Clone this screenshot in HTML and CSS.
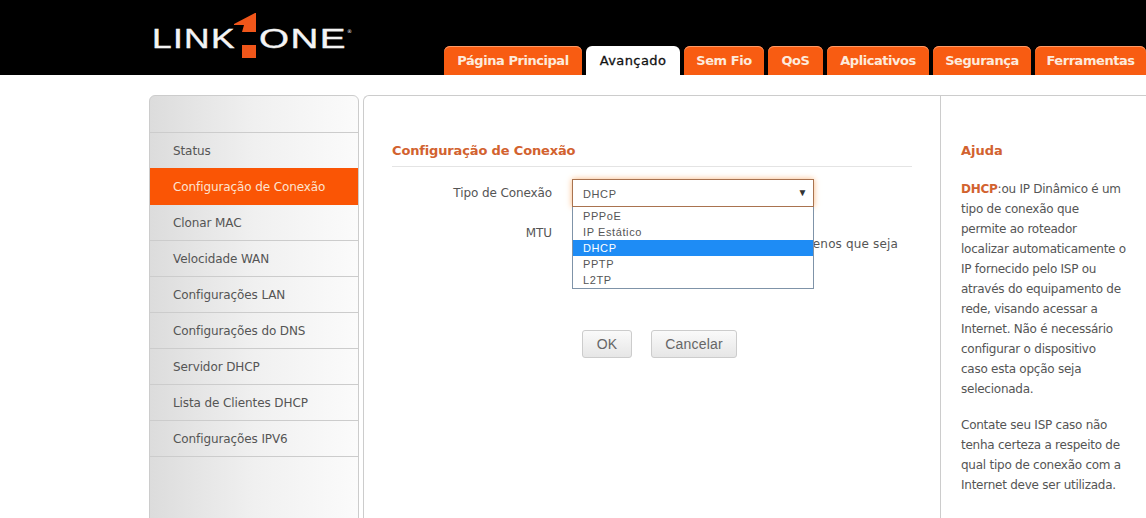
FILE: index.html
```html
<!DOCTYPE html>
<html lang="pt-BR">

<head>
    <meta charset="UTF-8">
    <meta name="viewport" content="width=device-width, initial-scale=1.0">
    <title>Configuração de Conexão</title>
    <link rel="stylesheet" href="styles.css">
</head>

<body>
    <header class="topBar">
        <div class="logo">
            <span class="logoWord logoLink">LINK</span>
            <svg class="logoOne" width="24" height="46" viewBox="0 0 24 46">
                <polygon fill="#f0561a" points="2,11 23,0 24,0 24,19 10,19 12,12 2,12" />
                <polygon fill="#f0561a" points="10,32 24,32 24,45 10,45" />
            </svg>
            <span class="logoWord logoRest">ONE</span>
            <span class="logoMark">®</span>
        </div>
        <nav class="tabs">
            <a class="tab tabHome" href="#">Página Principal</a>
            <a class="tab tabAdvanced active" href="#">Avançado</a>
            <a class="tab tabWifi" href="#">Sem Fio</a>
            <a class="tab tabQos" href="#">QoS</a>
            <a class="tab tabApps" href="#">Aplicativos</a>
            <a class="tab tabSecurity" href="#">Segurança</a>
            <a class="tab tabTools" href="#">Ferramentas</a>
        </nav>
    </header>

    <div class="page">
        <aside class="sidebar">
            <ul class="menu">
                <li><a href="#">Status</a></li>
                <li class="current"><a href="#">Configuração de Conexão</a></li>
                <li><a href="#">Clonar MAC</a></li>
                <li><a href="#">Velocidade WAN</a></li>
                <li><a href="#">Configurações LAN</a></li>
                <li><a href="#">Configurações do DNS</a></li>
                <li><a href="#">Servidor DHCP</a></li>
                <li><a href="#">Lista de Clientes DHCP</a></li>
                <li><a href="#">Configurações IPV6</a></li>
            </ul>
        </aside>

        <main class="panel">
            <section class="content">
                <h2 class="sectionTitle">Configuração de Conexão</h2>
                <form class="form">
                    <div class="formRow">
                        <label class="formLabel">Tipo de Conexão</label>
                        <div class="selectBox">
                            <div class="selectValue">DHCP<span class="arrow">▼</span></div>
                            <ul class="options">
                                <li>PPPoE</li>
                                <li>IP Estático</li>
                                <li class="selected">DHCP</li>
                                <li>PPTP</li>
                                <li>L2TP</li>
                            </ul>
                        </div>
                    </div>
                    <div class="formRow mtuRow">
                        <label class="formLabel">MTU</label>
                        <p class="mtuNote">menos que seja</p>
                    </div>
                    <div class="buttons">
                        <button type="button" class="btn btnOk">OK</button>
                        <button type="button" class="btn btnCancel">Cancelar</button>
                    </div>
                </form>
            </section>

            <aside class="help">
                <h2 class="helpTitle">Ajuda</h2>
                <p><strong>DHCP</strong>:ou IP Dinâmico é um<br>tipo de conexão que<br>permite ao roteador<br>localizar automaticamente o<br>IP fornecido pelo ISP ou<br>através do equipamento de<br>rede, visando acessar a<br>Internet. Não é necessário<br>configurar o dispositivo<br>caso esta opção seja<br>selecionada.</p>
                <p>Contate seu ISP caso não<br>tenha certeza a respeito de<br>qual tipo de conexão com a<br>Internet deve ser utilizada.</p>
            </aside>
        </main>
    </div>
</body>

</html>
```

FILE: styles.css
```css
html,
body {
    margin: 0;
    height: 518px;
    overflow: hidden;
    background-color: #fff;
    font-family: "DejaVu Sans", Verdana, sans-serif;
    font-size: 12px;
    letter-spacing: -0.1px;
    color: #555;
}

/* Header */
.topBar {
    display: flex;
    align-items: flex-end;
    height: 75px;
    background-color: #000;
    position: relative;
}

.logo {
    display: flex;
    align-items: flex-start;
    width: 444px;
    height: 75px;
    padding-left: 152px;
    box-sizing: border-box;
    flex-shrink: 0;
    color: #f4f4f4;
}

.logoWord {
    display: block;
    margin-top: 24px;
    font-family: "Liberation Sans", Arial, sans-serif;
    font-size: 27px;
    line-height: 30px;
    letter-spacing: 1px;
    -webkit-text-stroke: 0.4px #f4f4f4;
    transform-origin: left center;
}

.logoLink {
    width: 80px;
    transform: scaleX(1.31);
}

.logoOne {
    margin-top: 13px;
    flex-shrink: 0;
}

.logoRest {
    width: 88px;
    margin-left: 3px;
    transform: scaleX(1.43);
}

.logoMark {
    font-size: 5px;
    line-height: 6px;
    margin-top: 28px;
    letter-spacing: 0;
}

.tabs {
    display: flex;
    align-items: flex-end;
    gap: 4px;
    flex: 1;
    height: 29px;
}

.tab {
    display: block;
    height: 29px;
    line-height: 29px;
    box-sizing: border-box;
    text-align: center;
    text-decoration: none;
    font-size: 13px;
    font-weight: bold;
    letter-spacing: -0.45px;
    white-space: nowrap;
    color: #fdeadc;
    background-color: #f85c12;
    border-radius: 6px 6px 0 0;
    box-shadow: inset 0 1px 0 #ff9a66;
}

.tab.active {
    color: #111;
    background-color: #fff;
    box-shadow: none;
    font-weight: normal;
    letter-spacing: 0.4px;
    -webkit-text-stroke: 0.3px #111;
}

.tabHome { width: 138px; }
.tabAdvanced { width: 94px; }
.tabWifi { width: 80px; }
.tabQos { width: 55px; }
.tabApps { width: 102px; }
.tabSecurity { width: 98px; }
.tabTools { width: 111px; flex-shrink: 0; }

/* Body of the page */
.page {
    display: flex;
    align-items: stretch;
    gap: 4px;
    height: 443px;
    padding: 20px 0 0 149px;
    box-sizing: border-box;
}

.sidebar {
    width: 210px;
    height: 440px;
    flex-shrink: 0;
    box-sizing: border-box;
    padding-top: 36px;
    border: 1px solid #ccc;
    border-radius: 6px 6px 0 0;
    background-image: linear-gradient(90deg, #dcdcdc, #f0f0f0 50%, #fbfbfb);
}

.menu {
    list-style: none;
    margin: 0;
    padding: 0;
    border-top: 1px solid #ccc;
}

.menu li {
    height: 35px;
    border-bottom: 1px solid #ccc;
}

.menu a {
    display: block;
    padding-left: 23px;
    line-height: 37px;
    text-decoration: none;
    color: #555;
}

.menu li.current {
    background-color: #fa5505;
    border-bottom-color: #fa5505;
    margin-top: -1px;
    padding-top: 1px;
}

.menu li.current a {
    color: #fde3cf;
}

.panel {
    display: flex;
    flex: 1;
    height: 440px;
    box-sizing: border-box;
    border: 1px solid #ccc;
    border-right: none;
    border-radius: 6px 0 0 0;
}

.content {
    width: 520px;
    flex-shrink: 0;
    padding: 45px 28px 0 28px;
}

.sectionTitle {
    margin: 0;
    padding-bottom: 6px;
    font-size: 13px;
    letter-spacing: -0.15px;
    line-height: 19px;
    color: #d2622f;
    border-bottom: 1px solid #e4e4e4;
}

.form {
    margin-top: 12px;
}

.formRow {
    display: flex;
    align-items: flex-start;
    gap: 20px;
    position: relative;
}

.formLabel {
    width: 160px;
    text-align: right;
    line-height: 28px;
}

.selectBox {
    position: relative;
    width: 242px;
    height: 28px;
    z-index: 2;
}

.selectValue {
    box-sizing: border-box;
    height: 28px;
    padding: 0 10px;
    line-height: 28px;
    font-family: "Liberation Sans", Arial, sans-serif;
    font-size: 11px;
    letter-spacing: 0.6px;
    border: 1px solid #a9734f;
    box-shadow: 0 0 6px #fbb97f;
    position: relative;
}

.arrow {
    position: absolute;
    right: 5px;
    top: -1px;
    font-size: 10px;
    color: #333;
}

/* Open list lies over the MTU row */
.options {
    position: absolute;
    top: 28px;
    left: 0;
    right: 0;
    margin: 0;
    padding: 1px 0 0;
    list-style: none;
    background-color: #fff;
    border: 1px solid #7f93a8;
    border-top: none;
    font-family: "Liberation Sans", Arial, sans-serif;
    font-size: 11px;
    letter-spacing: 0.6px;
    height: 82px;
    box-sizing: border-box;
}

.options li {
    height: 16px;
    line-height: 16px;
    padding-left: 10px;
}

.options li.selected {
    background-color: #1e8cf5;
    color: #fff;
}

.mtuRow {
    margin-top: 12px;
    height: 48px;
}

.mtuNote {
    position: absolute;
    left: 409px;
    top: 17px;
    margin: 0;
    line-height: 16px;
    white-space: nowrap;
    letter-spacing: 0.15px;
    z-index: 1;
}

.buttons {
    display: flex;
    gap: 19px;
    margin: 63px 0 0 190px;
}

.btn {
    height: 28px;
    padding: 0;
    font-family: "Liberation Sans", Arial, sans-serif;
    font-size: 14px;
    letter-spacing: 0.2px;
    color: #666;
    border: 1px solid #ccc;
    border-radius: 3px;
    background-image: linear-gradient(180deg, #fafafa, #e6e6e6);
}

.btnOk { width: 50px; }
.btnCancel { width: 86px; }

.help {
    flex: 1;
    box-sizing: border-box;
    padding: 45px 0 0 20px;
    border-left: 1px solid #ccc;
    line-height: 20px;
    letter-spacing: -0.25px;
    white-space: nowrap;
}

.helpTitle {
    margin: 0 0 19px;
    font-size: 13px;
    letter-spacing: 0;
    line-height: 19px;
    color: #d2622f;
}

.help p {
    margin: 0 0 16px;
}

.help strong {
    color: #d2622f;
}
```
